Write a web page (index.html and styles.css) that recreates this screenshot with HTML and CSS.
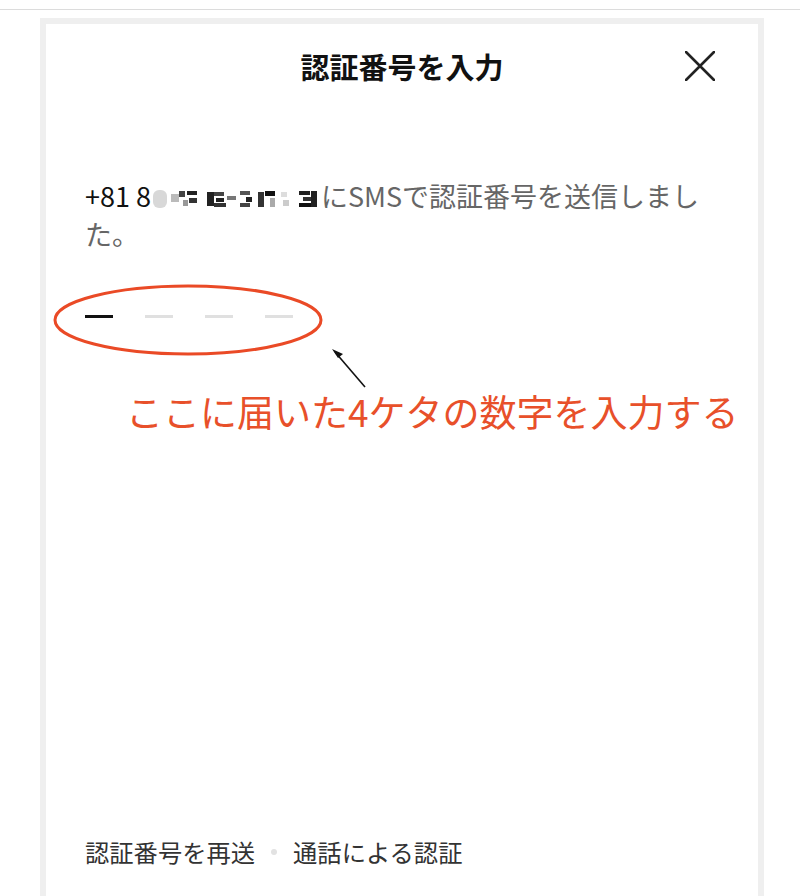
FILE: index.html
```html
<!DOCTYPE html>
<html lang="ja">
<head>
  <meta charset="UTF-8" />
  <meta name="viewport" content="width=device-width, initial-scale=1.0"/>
  <title>認証番号を入力</title>
  <link rel="stylesheet" href="styles.css">
</head>
<body>
  <div class="topbar"></div>

  <div class="sheet">
    <!-- header -->
    <div class="sheet-head">
      <h1 class="title">認証番号を入力</h1>
      <button class="close" aria-label="閉じる">
        <svg width="30" height="30" viewBox="0 0 30 30">
          <path d="M1 1 L29 29 M29 1 L1 29" stroke="#222" stroke-width="2.6" fill="none" stroke-linecap="round"/>
        </svg>
      </button>
    </div>

    <!-- message -->
    <p class="message"><span class="phone">+81 8<svg class="masked" width="168" height="22" viewBox="0 0 168 22">
        <rect x="0" y="2" width="14" height="18" rx="6" fill="#d8d8d8"/>
        <rect x="18" y="6" width="8" height="8" fill="#bbb"/>
        <rect x="26" y="3" width="6" height="6" fill="#444"/>
        <rect x="34" y="3" width="10" height="4" fill="#222"/>
        <rect x="36" y="10" width="8" height="5" fill="#333"/>
        <rect x="30" y="12" width="5" height="6" fill="#999"/>
        <rect x="54" y="4" width="7" height="14" fill="#222"/>
        <rect x="61" y="4" width="10" height="4" fill="#444"/>
        <rect x="63" y="10" width="8" height="4" fill="#222"/>
        <rect x="61" y="15" width="12" height="4" fill="#333"/>
        <rect x="74" y="8" width="9" height="4" fill="#777"/>
        <rect x="87" y="3" width="10" height="4" fill="#555"/>
        <rect x="93" y="9" width="6" height="5" fill="#222"/>
        <rect x="87" y="15" width="10" height="4" fill="#444"/>
        <rect x="105" y="4" width="6" height="15" fill="#333"/>
        <rect x="112" y="3" width="10" height="5" fill="#111"/>
        <rect x="117" y="10" width="5" height="9" fill="#aaa"/>
        <rect x="128" y="4" width="6" height="5" fill="#ddd"/>
        <rect x="130" y="12" width="6" height="6" fill="#ccc"/>
        <rect x="146" y="3" width="11" height="4" fill="#222"/>
        <rect x="150" y="9" width="8" height="4" fill="#333"/>
        <rect x="146" y="15" width="12" height="4" fill="#111"/>
        <rect x="158" y="3" width="6" height="16" fill="#222"/>
      </svg></span>にSMSで認証番号を送信しました。</p>

    <!-- code input -->
    <div class="code">
      <span class="digit active"></span>
      <span class="digit"></span>
      <span class="digit"></span>
      <span class="digit"></span>
    </div>

    <!-- annotation overlay -->
    <svg class="annot-mark" width="340" height="130" viewBox="0 0 340 130">
      <ellipse cx="142" cy="46" rx="133" ry="34" fill="none" stroke="#ea4a26" stroke-width="3"/>
      <path d="M319 113 L289 78" stroke="#111" stroke-width="1.6" fill="none"/>
      <path d="M286 75 L297 80 L292 84 Z" fill="#111"/>
    </svg>
    <p class="annot-text">ここに届いた4ケタの数字を入力する</p>

    <!-- footer links -->
    <div class="links">
      <a class="link">認証番号を再送</a>
      <span class="dot"></span>
      <a class="link">通話による認証</a>
    </div>
  </div>
</body>
</html>
```

FILE: styles.css
```css
* {
  margin: 0;
  padding: 0;
  box-sizing: border-box;
}

html, body {
  height: 100%;
  background: #fff;
  font-family: "Noto Sans CJK JP", "Noto Sans", sans-serif;
  color: #222;
  overflow: hidden;
}

.topbar {
  height: 10px;
  border-bottom: 1px solid #dcdcdc;
}

.sheet {
  position: relative;
  display: flex;
  flex-direction: column;
  margin: 8px 36px 0 40px;
  height: 878px;
  border: 6px solid #efefef;
  border-bottom: none;
  padding: 0 39px 27px 39px;
}

.sheet-head {
  position: relative;
  height: 84px;
  display: flex;
  align-items: center;
  justify-content: center;
}

.title {
  font-size: 29px;
  font-weight: 700;
  line-height: 1;
  color: #111;
}

.close {
  position: absolute;
  right: 4px;
  top: 27px;
  background: none;
  border: none;
  width: 30px;
  height: 30px;
}

.message {
  margin-top: 69px;
  font-size: 27px;
  line-height: 38px;
  color: #666;
}

.phone {
  color: #111;
}

.masked {
  vertical-align: -3px;
  margin-left: 2px;
}

.code {
  display: flex;
  gap: 32px;
  margin-top: 62px;
}

.digit {
  width: 28px;
  height: 3px;
  background: #e0e0e0;
}

.digit.active {
  background: #111;
}

.annot-mark {
  position: absolute;
  left: 0;
  top: 250px;
}

.annot-text {
  position: absolute;
  left: 80px;
  top: 362px;
  font-size: 37px;
  line-height: 50px;
  color: #e8502a;
  white-space: nowrap;
}

.links {
  margin-top: auto;
  display: flex;
  align-items: center;
  gap: 16px;
  font-size: 24.3px;
  line-height: 34px;
  color: #333;
}

.dot {
  width: 6px;
  height: 6px;
  border-radius: 50%;
  background: #e2e2e2;
}
```
